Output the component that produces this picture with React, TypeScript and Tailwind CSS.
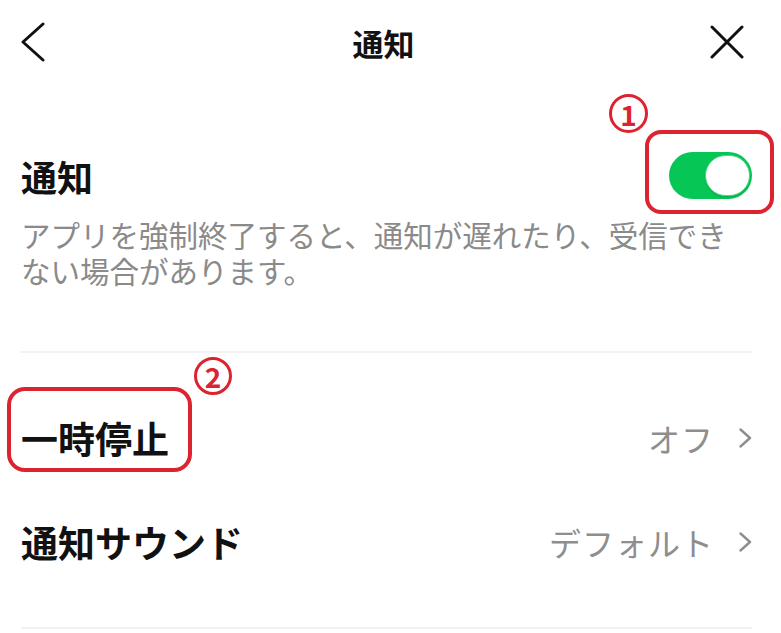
const font = { fontFamily: '"Noto Sans CJK JP", "Noto Sans", sans-serif' };

const Chevron = () => (
  <svg width="14" height="20" viewBox="0 0 14 20" fill="none">
    <path d="M2.5 1.5 L12 10 L2.5 18.5" stroke="#8e8e8e" strokeWidth="2.4" strokeLinecap="round" strokeLinejoin="round" />
  </svg>
);

const Row = ({ title, value }: { title: string; value: string }) => (
  <div className="flex h-[104px] items-center justify-between">
    <span className="text-[37px] font-bold leading-none text-[#111]">{title}</span>
    <div className="flex items-center gap-[24px]">
      <span className="text-[32px] leading-none tracking-[1px] text-[#8e8e8e]">{value}</span>
      <Chevron />
    </div>
  </div>
);

export default function App() {
  return (
    <div className="relative h-[633px] w-[781px] overflow-hidden bg-white" style={font}>
      {/* ヘッダー */}
      <header className="flex h-[84px] items-center pl-[20px] pr-[37px]">
        <svg width="26" height="40" viewBox="0 0 26 40" fill="none">
          <path d="M23 2 L3 20 L23 38" stroke="#111" strokeWidth="3" strokeLinecap="round" strokeLinejoin="round" />
        </svg>
        <h1 className="flex-1 pl-[11px] text-center text-[31px] font-bold leading-none text-[#111]">通知</h1>
        <svg width="34" height="34" viewBox="0 0 34 34" fill="none">
          <path d="M2 2 L32 32 M32 2 L2 32" stroke="#111" strokeWidth="3" strokeLinecap="round" />
        </svg>
      </header>

      <main className="pl-[21px] pr-[29px]">
        {/* 通知 */}
        <div className="mt-[68px] flex h-[47px] items-center justify-between">
          <span className="text-[36px] font-bold leading-none text-[#111]">通知</span>
          <div className="flex h-[47px] w-[83px] items-center justify-end rounded-full bg-[#06c755] pr-[2px]">
            <div className="h-[41px] w-[45px] rounded-full border border-[#4fd488] bg-white shadow-[0_1px_2px_rgba(0,0,0,0.15)]" />
          </div>
        </div>
        <p className="mt-[17px] text-[29.5px] leading-[36px] text-[#8a8a8a]">
          アプリを強制終了すると、通知が遅れたり、受信でき
          <br />
          ない場合があります。
        </p>

        <div className="mt-[63px] h-[2px] bg-[#f2f2f2]" />

        <div className="py-[33px]">
          <Row title="一時停止" value="オフ" />
          <Row title="通知サウンド" value="デフォルト" />
        </div>

        <div className="h-[2px] bg-[#f2f2f2]" />
      </main>

      {/* 注釈 */}
      <div className="absolute left-[609px] top-[94px] flex h-[39px] w-[39px] items-center justify-center rounded-full border-[3.5px] border-[#dc2430] text-[28px] font-bold leading-none text-[#dc2430]">
        1
      </div>
      <div className="absolute left-[645px] top-[130px] h-[84px] w-[129px] rounded-[16px] border-4 border-[#dc2430]" />
      <div className="absolute left-[194px] top-[357px] flex h-[38px] w-[38px] items-center justify-center rounded-full border-[3.5px] border-[#dc2430] text-[28px] font-bold leading-none text-[#dc2430]">
        2
      </div>
      <div className="absolute left-[7px] top-[387px] h-[85px] w-[185px] rounded-[18px] border-4 border-[#dc2430]" />
    </div>
  );
}
